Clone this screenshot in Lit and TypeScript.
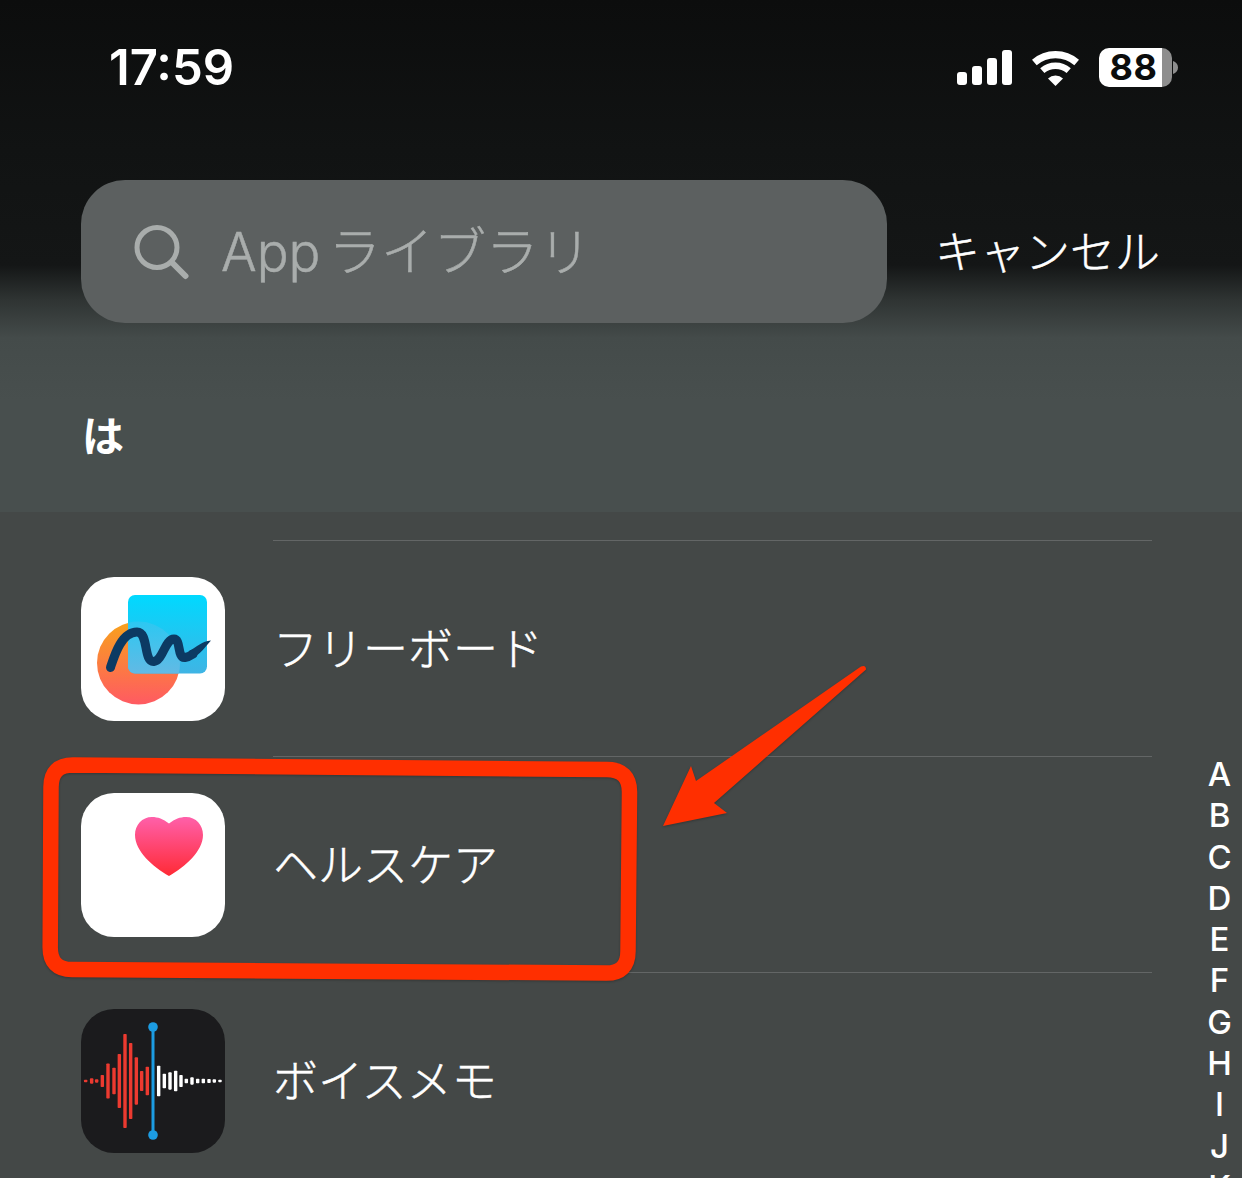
import { LitElement, html, css, svg } from "lit";
import { customElement } from "lit/decorators.js";

const WAVE: [number, number, string][] = [
  [77, 8, "r"], [95, 16, "r"], [110, 10, "r"], [127, 36, "r"], [144, 105, "r"], [162, 80, "r"],
  [178, 162, "r"], [195, 282, "r"], [212, 228, "r"], [229, 142, "r"], [245, 60, "r"], [262, 86, "r"],
  [296, 92, "w"], [313, 44, "w"], [330, 52, "w"], [347, 62, "w"], [363, 36, "w"], [379, 14, "w"],
  [396, 22, "w"], [413, 14, "w"], [430, 14, "w"], [447, 12, "w"], [463, 10, "w"], [480, 8, "w"],
];

const freeform = html`<svg viewBox="0 0 144 144" width="144" height="144">
  <defs>
    <linearGradient id="ffc" x1="0" y1="0" x2="0" y2="1"><stop offset="0" stop-color="#f8a21c"/><stop offset="1" stop-color="#ff5a62"/></linearGradient>
    <linearGradient id="ffs" x1="0" y1="0" x2="0" y2="1"><stop offset="0" stop-color="#00d9ff"/><stop offset="1" stop-color="#3fb4e4"/></linearGradient>
    <linearGradient id="ffo" x1="0" y1="0" x2="0" y2="1"><stop offset="0" stop-color="#2cc8f2"/><stop offset="1" stop-color="#82b1dc"/></linearGradient>
    <clipPath id="ffclip"><rect x="47" y="18" width="79" height="78.5" rx="7"/></clipPath>
  </defs>
  <rect width="144" height="144" fill="#fff"/>
  <circle cx="57.5" cy="86" r="41.5" fill="url(#ffc)"/>
  <rect x="47" y="18" width="79" height="78.5" rx="7" fill="url(#ffs)"/>
  <circle cx="57.5" cy="86" r="41.5" fill="url(#ffo)" clip-path="url(#ffclip)"/>
  <path d="M29.500 90.500C33 80 40 55 56 55C68 55 62 85.500 73 84.500C82 83.500 84 62 93 62C100 62 96 81.500 104 80.500C107 80 109 79 112 77" fill="none" stroke="#0c3a63" stroke-width="9" stroke-linecap="round"/>
  <path d="M108 74C116 70 121 64 130 63.500C125 69 118 79 110 82Z" fill="#0c3a63"/>
</svg>`;

const health = html`<svg viewBox="0 0 144 144" width="144" height="144">
  <defs><linearGradient id="hg" x1="0" y1="0" x2="0" y2="1"><stop offset="0" stop-color="#ff60aa"/><stop offset="1" stop-color="#ff2a35"/></linearGradient></defs>
  <rect width="144" height="144" fill="#fff"/>
  <path d="M88 30.500C82 26 77 24 71 24C61 24 54 32 54 42C54 58 72 74 88 83C104 74 122 58 122 42C122 32 115 24 105 24C99 24 94 26 88 30.500Z" fill="url(#hg)"/>
</svg>`;

const memos = html`<svg viewBox="0 0 144 144" width="144" height="144">
  <rect width="144" height="144" fill="#1b1b1d"/>
  ${WAVE.map(([x, h, c]) => svg`<rect x=${x / 3 - 21 - 1.7} y=${72 - h / 6} width="3.400" height=${h / 3} rx="0.800" fill=${c === "r" ? "#ec3a30" : "#ffffff"}/>`)}
  <rect x="70.500" y="18" width="3" height="108" fill="#1c9ce2"/>
  <circle cx="72" cy="18" r="4.800" fill="#1c9ce2"/>
  <circle cx="72" cy="126" r="4.800" fill="#1c9ce2"/>
</svg>`;

const APPS = [
  { name: "フリーボード", icon: freeform },
  { name: "ヘルスケア", icon: health },
  { name: "ボイスメモ", icon: memos },
];

const INDEX = "ABCDEFGHIJK".split("");

@customElement("app-root")
export class AppRoot extends LitElement {
  static styles = css`
    :host {
      display: block;
      position: relative;
      width: 1242px;
      height: 1178px;
      overflow: hidden;
      background: #444847;
      color: #fff;
      font-family: "Noto Sans CJK JP", "Noto Sans", sans-serif;
    }
    .top {
      height: 512px;
      background: linear-gradient(180deg, #0c0d0d 0, #111313 150px, #141616 265px, #2f3433 300px, #444b4a 338px, #484f4e 400px, #484f4e 512px);
      display: flex;
      flex-direction: column;
    }
    .status {
      height: 135px;
      padding: 0 64px 0 109px;
      display: flex;
      align-items: center;
      justify-content: space-between;
      box-sizing: border-box;
    }
    .time {
      font-family: Inter, "Liberation Sans", sans-serif;
      font-size: 49px;
      font-weight: 600;
      line-height: 1;
    }
    .indicators {
      display: flex;
      align-items: center;
    }
    .signal { margin-right: 20px; display: block; }
    .wifi { margin-right: 20px; display: block; }
    .battery {
      width: 73px;
      height: 39px;
      border-radius: 10px;
      background: linear-gradient(90deg, #fff 0, #fff 63px, #8e8e8e 63px);
      color: #0b0c0c;
      font-family: Inter, "Liberation Sans", sans-serif;
      font-weight: 700;
      font-size: 36px;
      letter-spacing: 0.5px;
      line-height: 39px;
      display: flex;
      justify-content: center;
      padding-right: 4px;
      box-sizing: border-box;
    }
    .cap {
      display: block;
      margin-left: 1px;
    }
    .search-row {
      margin-top: 45px;
      padding-left: 81px;
      display: flex;
      align-items: center;
    }
    .search {
      width: 806px;
      height: 143px;
      box-sizing: border-box;
      border-radius: 44px;
      background: #5c6060;
      display: flex;
      align-items: center;
      padding-left: 53px;
      color: #a9adac;
    }
    .search svg { display: block; margin-right: 31px; flex: none; }
    .search-label {
      display: flex;
      align-items: baseline;
      font-size: 52.5px;
      font-weight: 300;
      -webkit-text-stroke: 0.5px currentColor;
      line-height: 1;
      padding-bottom: 2px;
    }
    .latin {
      font-family: Inter, "Liberation Sans", sans-serif;
      font-size: 53px;
      margin-right: 8px;
    }
    .cancel {
      margin-left: 48px;
      padding-bottom: 4px;
      font-size: 45px;
      font-weight: 300;
      -webkit-text-stroke: 0.5px currentColor;
      line-height: 1;
    }
    .section {
      margin-top: 76px;
      padding-left: 82px;
      font-size: 42px;
      font-weight: 700;
      line-height: 70px;
    }
    .list {
      padding-top: 28px;
    }
    .row {
      display: flex;
      height: 216px;
      padding-left: 81px;
      box-sizing: border-box;
    }
    .icon {
      width: 144px;
      height: 144px;
      margin-top: 37px;
      border-radius: 33px;
      overflow: hidden;
      flex: none;
    }
    .icon svg { display: block; }
    .body {
      width: 879px;
      margin-left: 48px;
      border-top: 1px solid rgba(255, 255, 255, 0.17);
      display: flex;
      align-items: center;
      box-sizing: border-box;
      padding-bottom: 4px;
      font-size: 45px;
      font-weight: 300;
      -webkit-text-stroke: 0.5px currentColor;
    }
    .index {
      position: absolute;
      left: 1197px;
      top: 754px;
      width: 45px;
      text-align: center;
      font-family: Inter, "Liberation Sans", sans-serif;
      font-size: 33px;
      font-weight: 500;
    }
    .index div { height: 41.3px; line-height: 41.3px; }
    .annot {
      position: absolute;
      left: 0;
      top: 0;
      pointer-events: none;
      filter: drop-shadow(0 1px 1px rgba(0, 0, 0, 0.25));
    }
  `;

  render() {
    return html`
      <div class="top">
        <div class="status">
          <span class="time">17:59</span>
          <div class="indicators">
            <svg class="signal" width="55" height="35" viewBox="0 0 55 35" fill="#fff">
              <rect x="0" y="22" width="10" height="13" rx="3"/>
              <rect x="15" y="16" width="10" height="19" rx="3"/>
              <rect x="30" y="8" width="10" height="27" rx="3"/>
              <rect x="45" y="0" width="10" height="35" rx="3"/>
            </svg>
            <svg class="wifi" width="47" height="36" viewBox="0 0 47 36">
              <g fill="none" stroke="#fff">
                <path d="M2.300 12.500A32.300 32.300 0 0 1 44.700 12.500" stroke-width="7.200"/>
                <path d="M10.300 20.700A20.200 20.200 0 0 1 36.700 20.700" stroke-width="6.400"/>
              </g>
              <path d="M16 28.500A10.800 10.800 0 0 1 31 28.500L23.500 36Z" fill="#fff"/>
            </svg>
            <div class="battery">88</div>
            <svg class="cap" width="5" height="13" viewBox="0 0 5 13"><path d="M0 0C3 1 5 3.500 5 6.500C5 9.500 3 12 0 13Z" fill="#8e8e8e"/></svg>
          </div>
        </div>
        <div class="search-row">
          <div class="search">
            <svg width="56" height="56" viewBox="0 0 56 56" fill="none" stroke="#a9adac">
              <circle cx="23" cy="23.500" r="20" stroke-width="5"/>
              <path d="M38 38.500L51.500 52" stroke-width="6" stroke-linecap="round"/>
            </svg>
            <span class="search-label"><span class="latin">App</span><span>ライブラリ</span></span>
          </div>
          <span class="cancel">キャンセル</span>
        </div>
        <div class="section">は</div>
      </div>
      <div class="list">
        ${APPS.map(
          (a) => html`<div class="row">
            <div class="icon">${a.icon}</div>
            <div class="body">${a.name}</div>
          </div>`
        )}
      </div>
      <div class="index">${INDEX.map((c) => html`<div>${c}</div>`)}</div>
      <svg class="annot" width="1242" height="1178" viewBox="0 0 1242 1178">
        <path d="M73 765L607 769.500Q629.500 769.700 629.500 792L628 951Q628 973.300 606 973L72 969.500Q50 969.300 50.200 947L51 787Q51 765 73 765Z" fill="none" stroke="#ff2f00" stroke-width="15.500"/>
        <path d="M663 826L691 766L696 781L861 666.500Q866 664.500 866 669.500L714 803L727 813Z" fill="#ff2f00"/>
      </svg>
    `;
  }
}
